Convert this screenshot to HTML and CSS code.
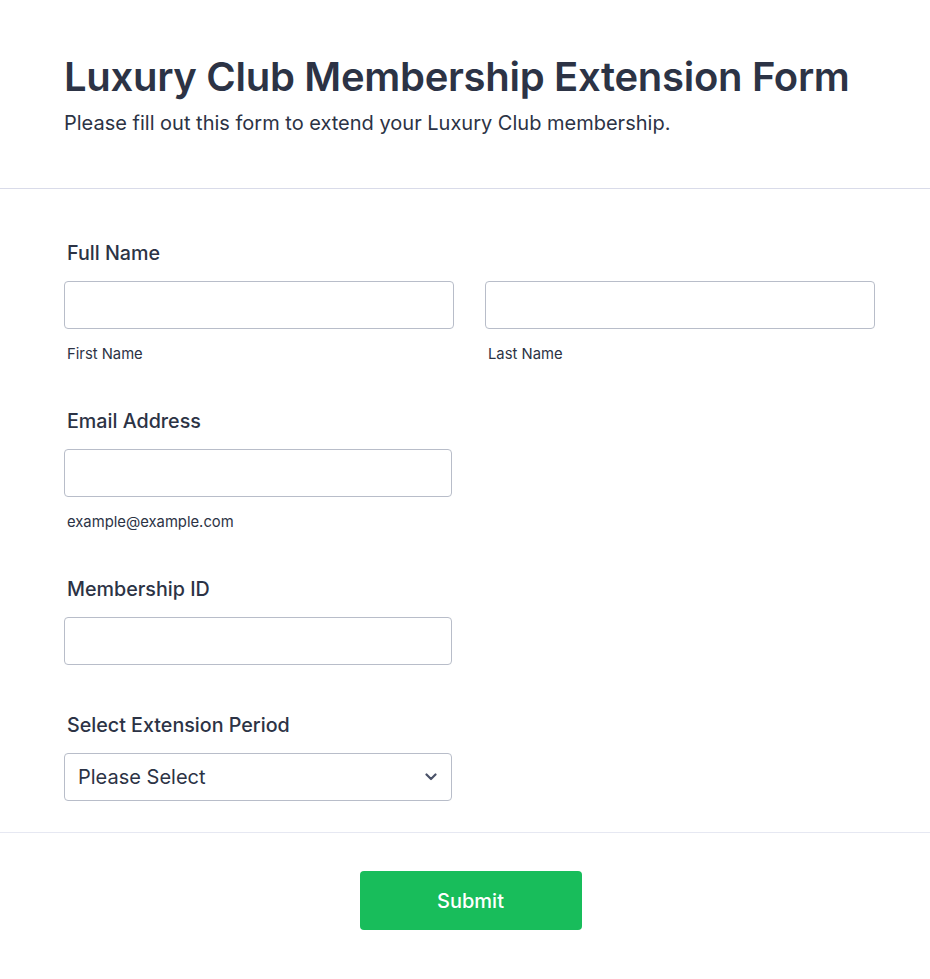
FILE: index.html
```html
<!DOCTYPE html>
<html lang="en">
<head>
<meta charset="utf-8">
<title>Luxury Club Membership Extension Form</title>
<link rel="stylesheet" href="styles.css">
</head>
<body>
<main class="form">
  <header class="header">
    <h1 class="title">Luxury Club Membership Extension Form</h1>
    <p class="subtitle">Please fill out this form to extend your Luxury Club membership.</p>
  </header>
  <section class="fields">
    <div class="field">
      <label class="label">Full Name</label>
      <div class="name-row">
        <div class="sub">
          <input class="input" type="text">
          <span class="sublabel">First Name</span>
        </div>
        <div class="sub">
          <input class="input" type="text">
          <span class="sublabel">Last Name</span>
        </div>
      </div>
    </div>
    <div class="field">
      <label class="label">Email Address</label>
      <div class="sub narrow">
        <input class="input" type="email">
        <span class="sublabel">example@example.com</span>
      </div>
    </div>
    <div class="field nosub">
      <label class="label">Membership ID</label>
      <div class="sub narrow">
        <input class="input" type="text">
      </div>
    </div>
    <div class="field">
      <label class="label">Select Extension Period</label>
      <div class="sub narrow">
        <div class="select">
          <span class="select-text">Please Select</span>
          <svg class="chevron" width="12" height="8" viewBox="0 0 12 8"><path d="M1.5 1.5 L6 6 L10.5 1.5" fill="none" stroke="#4a5268" stroke-width="2.2" stroke-linecap="round" stroke-linejoin="round"/></svg>
        </div>
      </div>
    </div>
  </section>
  <footer class="footer">
    <button class="submit" type="button">Submit</button>
  </footer>
</main>
</body>
</html>
```

FILE: styles.css
```css
* { box-sizing: border-box; }
html, body { margin: 0; padding: 0; background: #fff; }
body {
  font-family: Inter, "Noto Sans", "Liberation Sans", sans-serif;
  color: #2c3345;
  width: 930px;
}
.header {
  padding: 53px 64px 0 64px;
  height: 189px;
  border-bottom: 1px solid #d9dbe9;
}
.title {
  margin: 0;
  font-size: 40px;
  line-height: 48px;
  font-weight: 600;
  letter-spacing: -0.3px;
}
.subtitle {
  margin: 10px 0 0 0;
  font-size: 20px;
  line-height: 24px;
  font-weight: 400;
}
.fields {
  padding: 50px 55px 31px 64px;
  display: flex;
  flex-direction: column;
  gap: 44px;
  border-bottom: 1px solid #e6e8f2;
}
.field.nosub { margin-bottom: 2px; }
.label {
  display: block;
  font-size: 19.7px;
  line-height: 24px;
  font-weight: 500;
  padding: 2px 0 0 3px;
  margin-bottom: 16px;
}
.name-row {
  display: flex;
  gap: 31px;
}
.sub {
  width: 390px;
  display: flex;
  flex-direction: column;
}
.sub.narrow { width: 388px; }
.input {
  display: block;
  width: 100%;
  height: 48px;
  border: 1px solid #b8bdc9;
  border-radius: 4px;
  background: #fff;
  margin: 0;
  font: inherit;
}
.sublabel {
  display: block;
  margin-top: 16px;
  padding-left: 3px;
  font-size: 14.8px;
  line-height: 18px;
  color: #2c3345;
}
.select {
  height: 48px;
  border: 1px solid #b8bdc9;
  border-radius: 4px;
  display: flex;
  align-items: center;
  justify-content: space-between;
  padding: 0 14px 0 13px;
}
.select-text {
  font-size: 20px;
  line-height: 24px;
  color: #2c3345;
}
.chevron { display: block; }
.footer {
  display: flex;
  justify-content: center;
  padding: 38px 0 50px 0;
}
.submit {
  width: 222px;
  height: 59px;
  border: none;
  border-radius: 4px;
  background: #18bd5b;
  color: #fff;
  font-family: Inter, "Noto Sans", sans-serif;
  font-size: 20px;
  font-weight: 500;
  margin-left: 11px;
}
```
